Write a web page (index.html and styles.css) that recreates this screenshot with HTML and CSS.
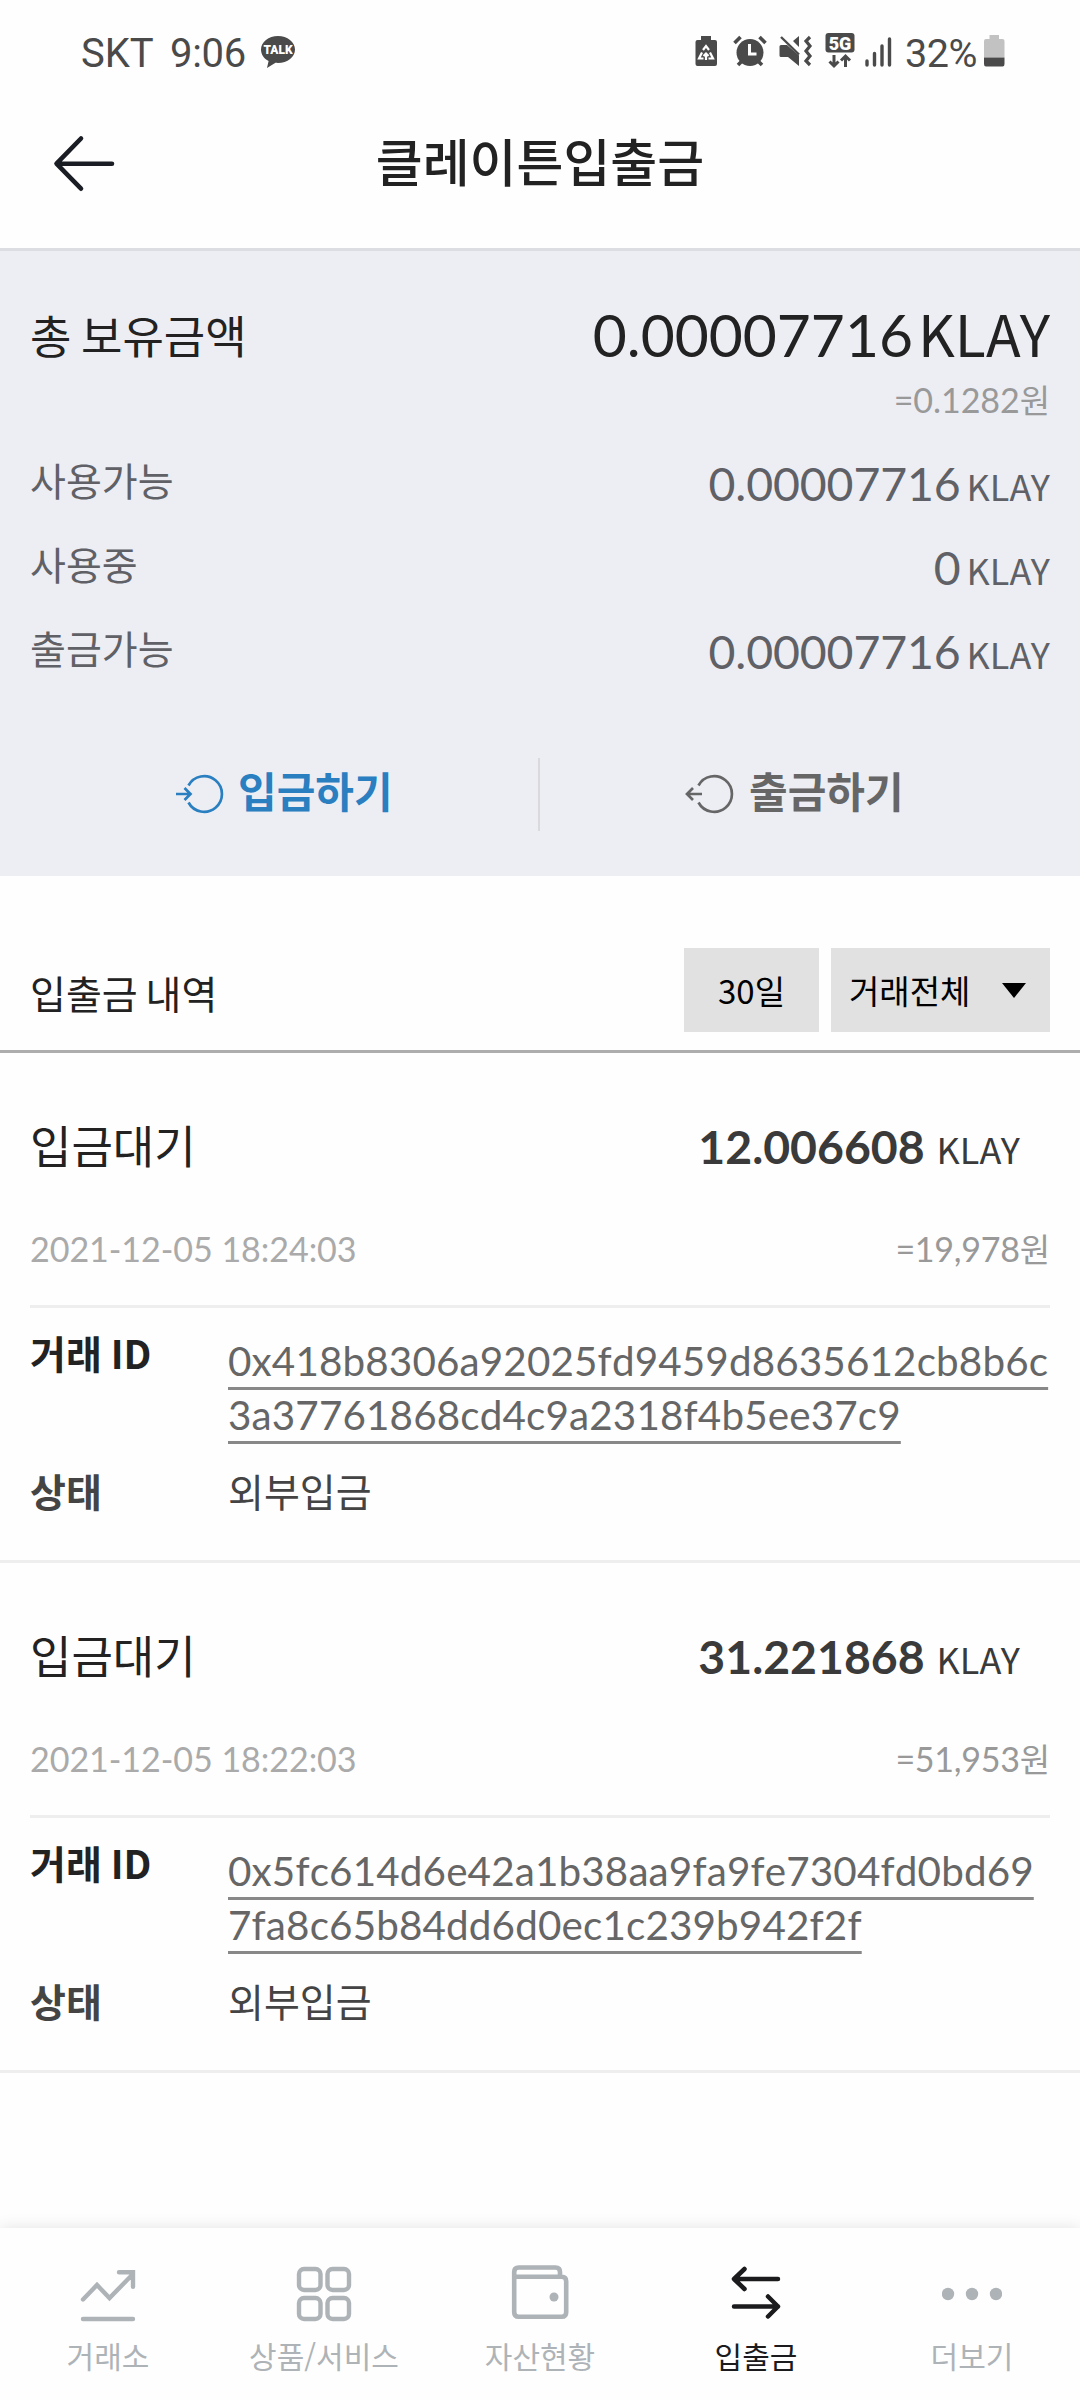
FILE: index.html
```html
<!DOCTYPE html>
<html lang="ko">
<head>
<meta charset="utf-8">
<title>클레이튼입출금</title>
<link rel="stylesheet" href="styles.css">
</head>
<body>
<div class="screen">
  <div class="status">
    <div class="status-left">
      <span class="carrier">SKT</span>
      <span class="clock">9:06</span>
      <svg class="talk" width="36" height="34" viewBox="0 0 36 34">
        <path d="M18 1C8.600 1 1 7 1 14.500c0 5 3 9.200 7.600 11.600L7 33l8.500-5.200c11 1 19.500-5 19.500-13.300C35 7 27.400 1 18 1z" fill="#4a4a4a"/>
        <text x="18" y="19" text-anchor="middle" class="talk-text">TALK</text>
      </svg>
    </div>
    <div class="status-right">
      <svg width="198" height="38" viewBox="695 32 198 38" fill="#4a4a4a">
        <path d="M701 36h10v4h4q2 0 2 2v22q0 2-2 2h-17.500q-2 0-2-2V42q0-2 2-2h3.500z"/>
        <path d="M703 50l3-4 3 4M702 52.500l-3 6h4.500M710 52.500l3 6h-4.500M706 60v-6M703.500 56l2.500-2.500 2.500 2.500" fill="none" stroke="#fff" stroke-width="2.200"/>
        <circle cx="750" cy="52.500" r="13.500"/>
        <path d="M734.500 43l6-6M765.500 43l-6-6M738 65l4-4M762 65l-4-4" stroke="#4a4a4a" stroke-width="3.600"/>
        <path d="M749.500 44v10h7" fill="none" stroke="#fff" stroke-width="3"/>
        <path d="M779.500 46.500q0-1.500 1.500-1.500h6l12 10.500V66l-11-9h-7q-1.500 0-1.500-1.500zM793 41l6-5v11z"/>
        <path d="M781 37l18 17.500" stroke="#4a4a4a" stroke-width="2.400"/>
        <path d="M810 37l-4 4 4 5-4 5 4 5-4 5 4 4" fill="none" stroke="#4a4a4a" stroke-width="3.200"/>
        <rect x="825.500" y="33" width="29" height="19.500" rx="3"/>
        <text x="840" y="49.500" text-anchor="middle" class="net-text">5G</text>
        <path d="M834 55v11M829.500 61.500l4.500 4.500 4.500-4.500M845.500 67V56M841 60.500l4.500-4.500 4.500 4.500" fill="none" stroke="#4a4a4a" stroke-width="3"/>
        <path d="M867 61v4M874.500 53.500v11.500M882 46v19M889.500 39v26" stroke="#4a4a4a" stroke-width="3.400" stroke-linecap="round"/>
      </svg>
      <span class="percent">32%</span>
      <svg class="battery" width="21" height="32" viewBox="0 0 21 32">
        <path d="M5.500 0h9.500v4h3.500q2 0 2 2V22.500H0V6q0-2 2-2h3.500z" fill="#c2c2c2"/>
        <path d="M0 22.500h20.500v6.500q0 2.500-2 2.500H2q-2 0-2-2.500z" fill="#4a4a4a"/>
      </svg>
    </div>
  </div>

  <header class="topbar">
    <svg class="back" width="64" height="60" viewBox="0 0 64 60" fill="none" stroke="#1b1d24" stroke-width="4.600" stroke-linecap="round" stroke-linejoin="round"><path d="M60 29.700H5M29 4.500L4.500 29.700l24.500 25"/></svg>
    <h1 class="title">클레이튼입출금</h1>
  </header>

  <section class="balance">
    <div class="total">
      <span class="total-label">총 보유금액</span>
      <span class="total-value"><span class="total-num">0.00007716</span><span class="total-unit">KLAY</span></span>
    </div>
    <div class="fiat balance-fiat"><span class="num">=0.1282</span>원</div>
    <div class="row"><span class="row-label">사용가능</span><span class="row-value"><span class="row-num">0.00007716</span><span class="unit">KLAY</span></span></div>
    <div class="row"><span class="row-label">사용중</span><span class="row-value"><span class="row-num">0</span><span class="unit">KLAY</span></span></div>
    <div class="row"><span class="row-label">출금가능</span><span class="row-value"><span class="row-num">0.00007716</span><span class="unit">KLAY</span></span></div>
    <div class="actions">
      <div class="action deposit">
        <svg width="50" height="40" viewBox="0 0 50 40" fill="none" stroke="currentColor" stroke-width="2.700"><path d="M13.500 11.500A17.800 17.800 0 1 1 13.500 28.500M1 20h14M9.500 14l6 6-6 6"/></svg>
        <span>입금하기</span>
      </div>
      <div class="action withdraw">
        <svg width="50" height="40" viewBox="0 0 50 40" fill="none" stroke="currentColor" stroke-width="2.700"><path d="M13.500 11.500A17.800 17.800 0 1 1 13.500 28.500M2 20h15M8 14l-6 6 6 6"/></svg>
        <span>출금하기</span>
      </div>
    </div>
  </section>

  <section class="history-head">
    <h2 class="history-title">입출금 내역</h2>
    <div class="filters">
      <div class="filter period">30일</div>
      <div class="filter kind"><span>거래전체</span><svg width="24" height="15" viewBox="0 0 24 15"><path d="M0 0h24L12 15z"/></svg></div>
    </div>
  </section>

  <article class="item">
    <div class="item-top"><span class="item-name">입금대기</span><span class="item-amount"><b class="amount">12.006608</b><span class="unit">KLAY</span></span></div>
    <div class="item-meta"><span class="date">2021-12-05 18:24:03</span><span class="fiat"><span class="num">=19,978</span>원</span></div>
    <div class="details">
      <span class="key">거래 ID</span>
      <span class="hash">0x418b8306a92025fd9459d8635612cb8b6c<br>3a37761868cd4c9a2318f4b5ee37c9</span>
      <span class="key state">상태</span>
      <span class="value">외부입금</span>
    </div>
  </article>

  <article class="item">
    <div class="item-top"><span class="item-name">입금대기</span><span class="item-amount"><b class="amount">31.221868</b><span class="unit">KLAY</span></span></div>
    <div class="item-meta"><span class="date">2021-12-05 18:22:03</span><span class="fiat"><span class="num">=51,953</span>원</span></div>
    <div class="details">
      <span class="key">거래 ID</span>
      <span class="hash">0x5fc614d6e42a1b38aa9fa9fe7304fd0bd69<br>7fa8c65b84dd6d0ec1c239b942f2f</span>
      <span class="key state">상태</span>
      <span class="value">외부입금</span>
    </div>
  </article>

  <nav class="tabs">
    <div class="tab">
      <svg width="60" height="60" viewBox="0 0 60 60" fill="none" stroke="currentColor" stroke-width="4.400" stroke-linecap="round"><path d="M5 36.500L19 22 31.500 35 54 12M41 9.200h14v14.500M5 56h50"/></svg>
      <span>거래소</span>
    </div>
    <div class="tab">
      <svg width="60" height="60" viewBox="0 0 60 60" fill="none" stroke="currentColor" stroke-width="4.400"><rect x="5" y="6" width="21.500" height="21" rx="5"/><rect x="33.500" y="6" width="21.500" height="21" rx="5"/><rect x="5" y="35" width="21.500" height="21" rx="5"/><rect x="33.500" y="35" width="21.500" height="21" rx="5"/></svg>
      <span>상품/서비스</span>
    </div>
    <div class="tab">
      <svg width="60" height="60" viewBox="0 0 60 60" fill="none" stroke="currentColor" stroke-width="4.600"><path d="M4.200 9q0-4.500 4.500-4.500h36.800q4.500 0 4.500 4.500v4.500M4.200 8.500v40.800q0 4.500 4.500 4.500h43q4.500 0 4.500-4.500V18.200q0-4.500-4.500-4.500H4.200"/><circle cx="44" cy="34" r="4.500" fill="currentColor" stroke="none"/></svg>
      <span>자산현황</span>
    </div>
    <div class="tab active">
      <svg width="60" height="60" viewBox="0 0 60 60" fill="none" stroke="currentColor" stroke-width="4.500" stroke-linecap="round" stroke-linejoin="round"><path d="M52 16H8M18.500 6L8 16l10.500 10M8 43.500h44M42 33.500l10 10-10 10"/></svg>
      <span>입출금</span>
    </div>
    <div class="tab">
      <svg width="60" height="60" viewBox="0 0 60 60" fill="currentColor"><circle cx="6" cy="31" r="6.200"/><circle cx="30" cy="31" r="6.200"/><circle cx="54" cy="31" r="6.200"/></svg>
      <span>더보기</span>
    </div>
  </nav>
</div>
</body>
</html>
```
FILE: styles.css
```css
* { box-sizing: border-box; }

body {
  margin: 0;
  background: #fefefe;
  font-family: "Noto Sans CJK KR", sans-serif;
  color: #222;
}

svg { display: block; flex: none; }

.screen {
  width: 1080px;
  height: 2400px;
  display: flex;
  flex-direction: column;
  overflow: hidden;
}

/* status bar */
.status {
  height: 90px;
  display: flex;
  justify-content: space-between;
  padding: 32px 75px 0 81px;
  font-family: Roboto, sans-serif;
  font-size: 40px;
  line-height: 43px;
  color: #4a4a4a;
}
.status-left, .status-right { display: flex; }
.carrier { width: 89px; }
.clock { width: 90px; letter-spacing: -.3px; }
.talk { margin-top: 3px; }
.talk-text { font: 900 12px Roboto, sans-serif; fill: #fff; }
.net-text { font: 900 18px Roboto, sans-serif; fill: #fff; }
.percent { width: 79px; margin-left: 12px; font-size: 39.5px; letter-spacing: -.5px; }
.battery { margin-top: 3px; }

/* title bar */
.topbar {
  height: 158px;
  display: grid;
  grid-template-columns: 120px 1fr 120px;
}
.back { margin: 44px 0 0 52px; }
.title {
  margin: 37px 0 0;
  font-size: 51px;
  font-weight: 500;
  line-height: 66px;
  text-align: center;
}

/* balance panel */
.balance {
  height: 628px;
  border-top: 3px solid #dcdde2;
  background: #edeef4;
  padding: 51px 30px 0;
}
.total { height: 62px; display: flex; justify-content: space-between; line-height: 60px; }
.total-label { margin-top: 3px; font-size: 45px; word-spacing: -3px; }
.total-value { display: flex; align-items: baseline; }
.total-num { font-family: Lato, sans-serif; font-size: 58.7px; }
.total-unit { font-size: 57px; margin-left: 5px; }

.fiat { font-size: 33px; line-height: 40px; color: #999; }
.fiat .num { font-family: Lato, sans-serif; font-size: 34.1px; letter-spacing: -.3px; }
.balance-fiat { height: 40px; margin: 15px 0 35px; text-align: right; }
.balance-fiat .num { letter-spacing: -.1px; }

.row {
  height: 84px;
  display: flex;
  justify-content: space-between;
  line-height: 50px;
  color: #606166;
}
.row-label { font-size: 39px; }
.row-value { margin-top: 4px; height: 50px; display: flex; align-items: baseline; }
.row-num { font-family: Lato, sans-serif; font-size: 46.4px; letter-spacing: -.1px; }
.unit { font-size: 36px; margin-left: 6px; }

.actions {
  margin: 52px -30px 0;
  height: 73px;
  display: grid;
  grid-template-columns: 540px 540px;
}
.action { display: flex; align-items: center; gap: 13px; font-size: 42px; font-weight: 700; line-height: 60px; }
.action svg { margin-bottom: 2px; }
.action span { margin-bottom: 10px; }
.deposit { padding-left: 175px; border-right: 2px solid #dadadd; color: #2a7fc0; }
.withdraw { padding-left: 145px; gap: 14px; color: #666; }

/* history */
.history-head {
  height: 177px;
  border-bottom: 3px solid #adadad;
  padding: 72px 30px 0;
  display: flex;
  justify-content: space-between;
}
.history-title { margin: 19px 0 0; font-size: 39px; font-weight: 400; line-height: 50px; word-spacing: -3px; }
.filters { display: flex; gap: 12px; }
.filter {
  height: 84px;
  background: #e1e1e1;
  color: #000;
  font-size: 33px;
  line-height: 84px;
}
.period { width: 135px; text-align: center; }
.kind { width: 219px; padding: 0 24px 0 18px; display: flex; align-items: center; justify-content: space-between; }

.item {
  height: 510px;
  border-bottom: 3px solid #eee;
  padding: 62px 30px 0;
}
.item-top { height: 60px; display: flex; justify-content: space-between; line-height: 60px; }
.item-name { font-size: 45px; }
.item-amount { margin: 1px 30px 0 0; height: 60px; display: flex; align-items: baseline; color: #3a3a3a; }
.amount { font-family: Lato, sans-serif; font-size: 46.4px; font-weight: 700; }
.item-amount .unit { margin-left: 12px; }
.item-meta {
  margin-top: 53px;
  height: 80px;
  border-bottom: 3px solid #eee;
  display: flex;
  justify-content: space-between;
  align-items: baseline;
  line-height: 40px;
}
.date { font-family: Lato, sans-serif; font-size: 34.1px; letter-spacing: -.07px; color: #aaa; }

.details {
  padding-top: 19px;
  display: grid;
  grid-template-columns: 198px 1fr;
  grid-template-rows: 138px 50px;
  line-height: 50px;
  font-size: 39px;
  color: #444;
}
.key { font-weight: 700; color: #222; word-spacing: -2px; }
.state { color: #444; }
.hash {
  margin-top: 7px;
  font-family: Lato, sans-serif;
  font-size: 40.4px;
  font-kerning: none;
  letter-spacing: .14px;
  line-height: 54px;
  white-space: nowrap;
  color: #666;
  text-decoration: underline 3px #888;
  text-underline-offset: 11px;
  text-decoration-skip-ink: none;
}

/* bottom tabs */
.tabs {
  margin-top: auto;
  height: 172px;
  padding-top: 35px;
  display: grid;
  grid-template-columns: repeat(5, 1fr);
  background: #fefefe;
  box-shadow: 0 0 15px rgba(0, 0, 0, .11);
}
.tab {
  display: flex;
  flex-direction: column;
  align-items: center;
  gap: 12px;
  font-size: 30px;
  line-height: 40px;
  color: #aeb3b7;
}
.tab.active { color: #1b1b1e; }
```
